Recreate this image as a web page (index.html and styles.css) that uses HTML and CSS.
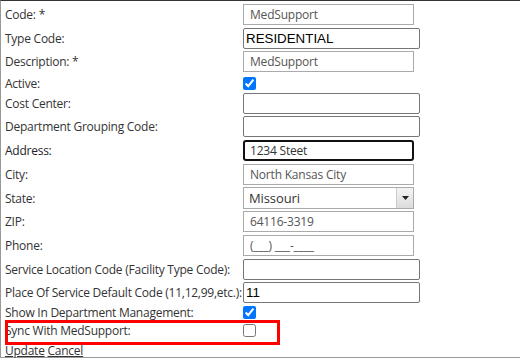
FILE: index.html
```html
<!DOCTYPE html>
<html lang="en">
<head>
    <meta charset="UTF-8">
    <title>Department Details</title>
    <link rel="stylesheet" href="styles.css">
</head>
<body>
    <div class="details">
        <div class="details-grid">
            <div class="label">Code: *</div>
            <div class="field"><input type="text" class="text-box" value="MedSupport"></div>

            <div class="label">Type Code:</div>
            <div class="field"><input type="text" class="plain-box" value="RESIDENTIAL"></div>

            <div class="label">Description: *</div>
            <div class="field"><input type="text" class="text-box" value="MedSupport"></div>

            <div class="label">Active:</div>
            <div class="field"><input type="checkbox" class="check" checked></div>

            <div class="label">Cost Center:</div>
            <div class="field"><input type="text" class="plain-box" value=""></div>

            <div class="label">Department Grouping Code:</div>
            <div class="field"><input type="text" class="plain-box" value=""></div>

            <div class="label label-dark">Address:</div>
            <div class="field"><input type="text" class="text-box focused" value="1234 Steet"></div>

            <div class="label">City:</div>
            <div class="field"><input type="text" class="text-box" value="North Kansas City"></div>

            <div class="label">State:</div>
            <div class="field">
                <div class="select-wrap">
                    <select class="select-box">
                        <option>Missouri</option>
                        <option>Kansas</option>
                    </select>
                    <span class="select-arrow">
                        <svg width="7" height="4" viewBox="0 0 7 4"><path d="M0 0h7L3.5 4z" fill="#222"/></svg>
                    </span>
                </div>
            </div>

            <div class="label">ZIP:</div>
            <div class="field"><input type="text" class="text-box" value="64116-3319"></div>

            <div class="label">Phone:</div>
            <div class="field"><input type="text" class="text-box" value="(___) ___-____"></div>

            <div class="label">Service Location Code (Facility Type Code):</div>
            <div class="field"><input type="text" class="plain-box" value=""></div>

            <div class="label">Place Of Service Default Code (11,12,99,etc.):</div>
            <div class="field"><input type="text" class="plain-box" value="11"></div>

            <div class="label">Show In Department Management:</div>
            <div class="field"><input type="checkbox" class="check" checked></div>

            <div class="label">Sync With MedSupport:</div>
            <div class="field"><input type="checkbox" class="check"></div>
        </div>

        <div class="actions">
            <a href="#">Update</a> <a href="#">Cancel</a>
        </div>

        <div class="highlight"></div>
    </div>
</body>
</html>
```

FILE: styles.css
```css
body {
    margin: 0;
    padding: 0;
    background-color: #fff;
    font-family: "Open Sans", "Noto Sans", sans-serif;
    font-size: 12px;
    letter-spacing: -0.25px;
    color: #333;
}

.details {
    position: relative;
    height: 356px;
    border-top: 1px solid #333;
    border-left: 1px solid #999;
    border-bottom: 1px solid #999;
}

.details-grid {
    display: grid;
    grid-template-columns: 242px auto;
    grid-template-rows: 26px 23px 23px 20px 21px 24px 24px 24px 24px 23px 24px 24px 23px 17px 19px;
    align-items: center;
}

.label {
    padding-left: 4px;
    white-space: nowrap;
}

.label-dark {
    color: #1e1e2a;
}

.field {
    display: flex;
    align-items: center;
}

.text-box {
    box-sizing: border-box;
    width: 171px;
    height: 21px;
    margin: 0;
    padding: 0 6px;
    border: 1px solid #aaa;
    border-radius: 0;
    font-family: "Open Sans", "Noto Sans", sans-serif;
    font-size: 12px;
    letter-spacing: -0.2px;
    color: #555;
    outline: none;
}

.text-box.focused {
    border: 2px solid #111;
    border-radius: 3px;
    padding: 0 5px;
    color: #333;
}

.plain-box {
    box-sizing: border-box;
    width: 177px;
    height: 21px;
    margin: 0;
    padding: 0 2px;
    border: 1px solid #767676;
    border-radius: 2px;
    font-family: Arial, "Liberation Sans", sans-serif;
    font-size: 13.33px;
    color: #000;
}

.select-wrap {
    box-sizing: border-box;
    display: flex;
    width: 171px;
    height: 22px;
    border: 1px solid #aaa;
}

.select-box {
    flex: 1;
    appearance: none;
    border: none;
    margin: 0;
    padding: 0 5px;
    background: #fff;
    font-family: "Open Sans", "Noto Sans", sans-serif;
    font-size: 13px;
    letter-spacing: -0.1px;
    color: #333;
}

.select-arrow {
    display: flex;
    align-items: center;
    justify-content: center;
    width: 16px;
    border-left: 1px solid #ccc;
    background: linear-gradient(#f4f4f4, #dcdcdc);
}

.check {
    width: 13px;
    height: 13px;
    margin: 0;
}

.actions {
    padding: 3px 0 0 4px;
    line-height: 16px;
}

.actions a {
    color: #333;
}

.highlight {
    position: absolute;
    left: 4px;
    top: 319px;
    width: 269px;
    height: 19px;
    border: 3px solid #f00;
}
```
